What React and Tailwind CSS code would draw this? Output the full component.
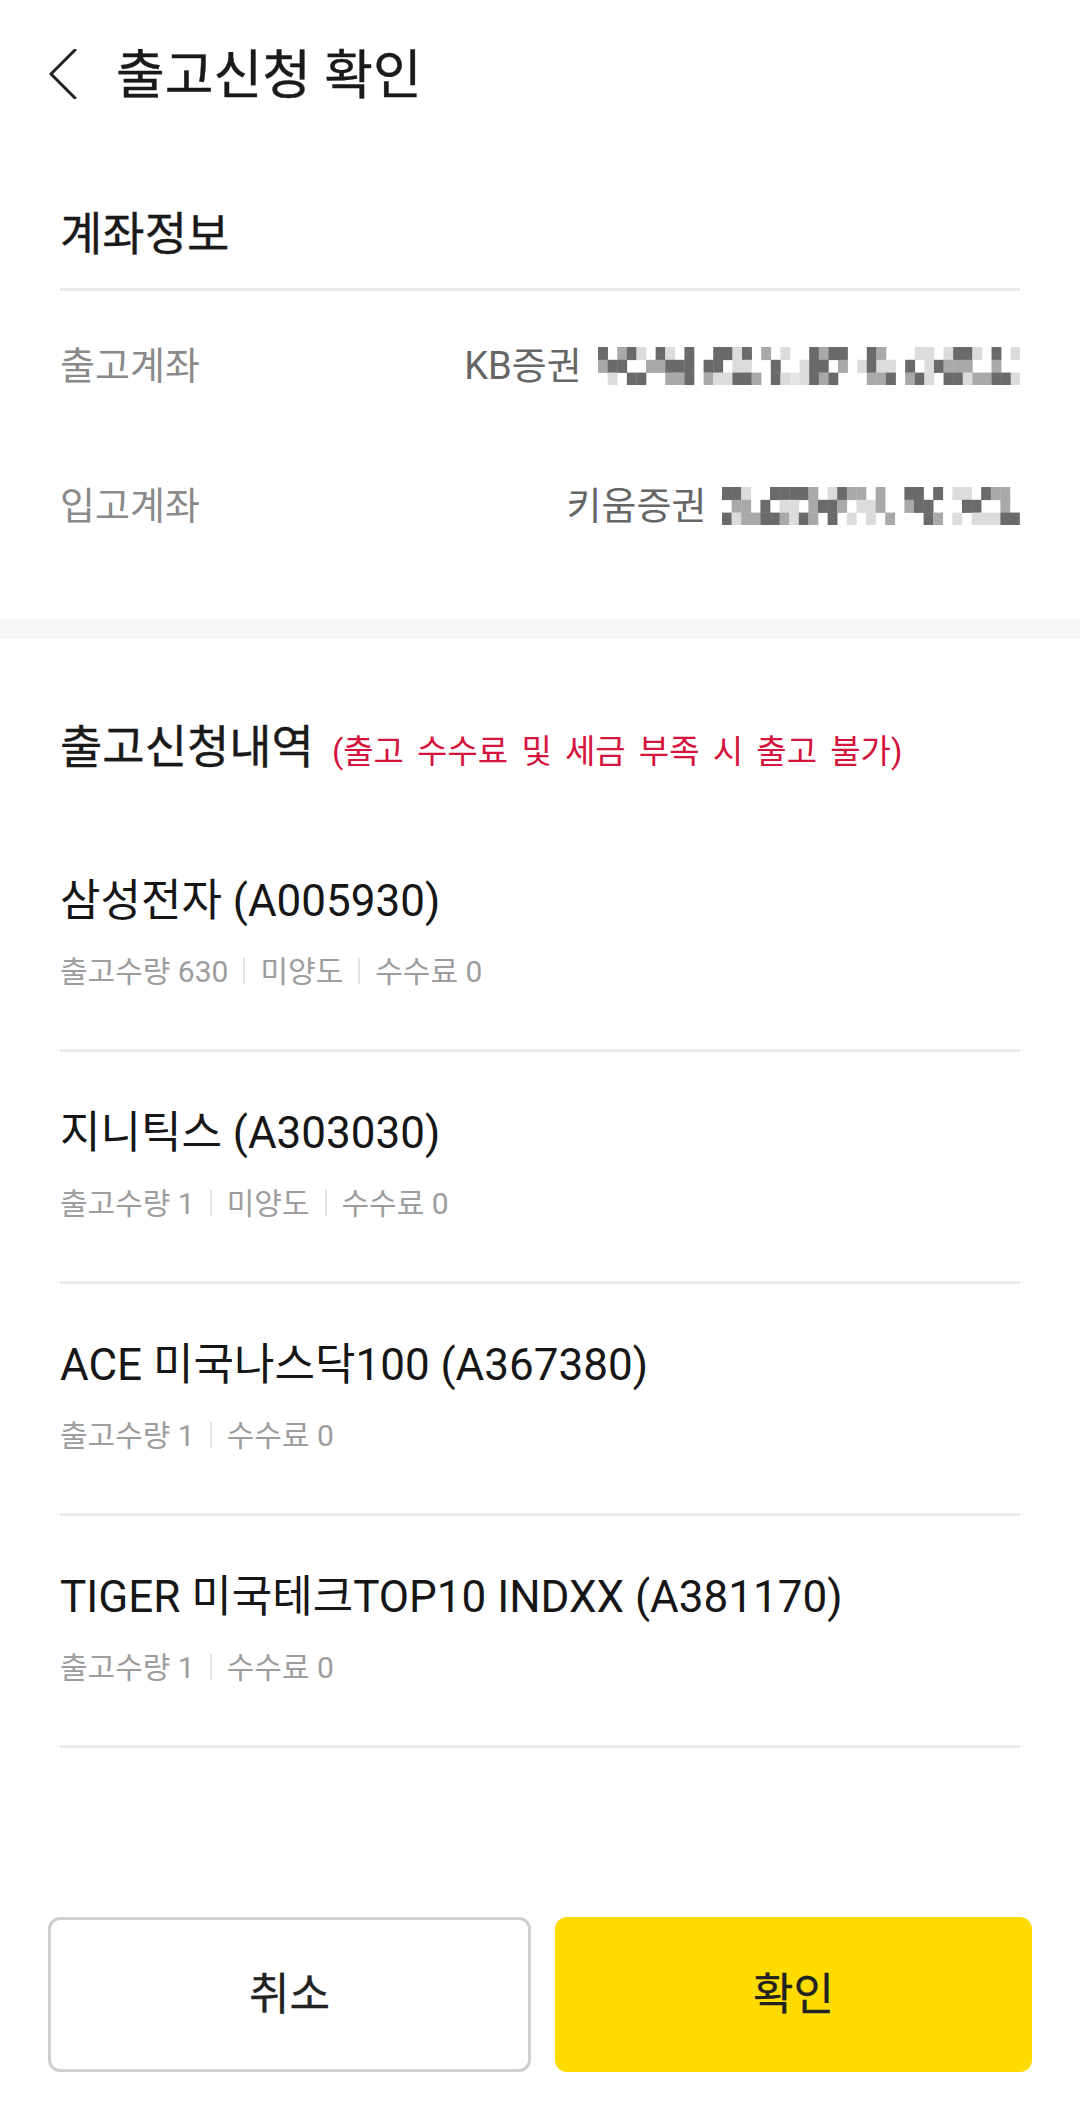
import React from "react";

function rand(seed) {
  let s = seed;
  return () => {
    s = (s * 1103515245 + 12345) % 2147483648;
    return s / 2147483648;
  };
}

function Mosaic({ width, seed, gaps = [] }) {
  const cw = 9.6;
  const ch = 12.8;
  const cols = Math.floor(width / cw);
  const r = rand(seed);
  const cells = [];
  for (let c = 0; c < cols; c++) {
    const gap = gaps.includes(c);
    for (let row = 0; row < 3; row++) {
      const v = r();
      if (gap && row !== 2) continue;
      let fill = null;
      if (gap) {
        if (v < 0.3) fill = "#e6e6e6";
      } else if (v < 0.3) fill = null;
      else if (v < 0.48) fill = "#dcdcdc";
      else if (v < 0.68) fill = "#a9a9a9";
      else fill = "#6a6a6a";
      if (fill) cells.push(<rect key={c + "-" + row} x={c * cw} y={row * ch} width={cw + 0.3} height={ch + 0.3} fill={fill} />);
    }
  }
  return (
    <svg width={cols * cw} height={ch * 3} viewBox={`0 0 ${cols * cw} ${ch * 3}`} className="block">
      {cells}
    </svg>
  );
}

const items = [
  { name: "삼성전자 (A005930)", meta: ["출고수량 630", "미양도", "수수료 0"] },
  { name: "지니틱스 (A303030)", meta: ["출고수량 1", "미양도", "수수료 0"] },
  { name: "ACE 미국나스닥100 (A367380)", meta: ["출고수량 1", "수수료 0"] },
  { name: "TIGER 미국테크TOP10 INDXX (A381170)", meta: ["출고수량 1", "수수료 0"] },
];

export default function App() {
  return (
    <div className="w-[1080px] h-[2110px] bg-white font-['Roboto','Noto_Sans_CJK_KR',sans-serif] text-[#1c1c1c] overflow-hidden">
      {/* Header */}
      <div className="h-[148px] flex items-center">
        <svg width="30" height="50" viewBox="0 0 30 50" className="ml-[48px]" fill="none">
          <path d="M27 1 L3 25 L27 49" stroke="#222" strokeWidth="3" strokeLinecap="round" strokeLinejoin="round" />
        </svg>
        <div className="ml-[38px] mt-[4px] text-[53px] leading-[64px] font-normal text-[#1a1a1a] [-webkit-text-stroke:0.4px_#1a1a1a]">출고신청 확인</div>
      </div>

      {/* Account info */}
      <div className="px-[60px]">
        <div className="pt-[60px] pb-[28px] text-[46px] leading-[52px] text-[#1a1a1a] [-webkit-text-stroke:0.35px_#1a1a1a]">계좌정보</div>
        <div className="h-[3px] bg-[#ebebeb]" />
        <div className="mt-[5px] h-[140px] flex items-center justify-between">
          <div className="text-[38px] text-[#8a8a8a]">출고계좌</div>
          <div className="flex items-center">
            <span className="text-[38px] text-[#666]">KB증권</span>
            <span className="ml-[16px]">
              <Mosaic width={430} seed={17} gaps={[10, 20, 26, 31]} />
            </span>
          </div>
        </div>
        <div className="h-[140px] flex items-center justify-between">
          <div className="text-[38px] text-[#8a8a8a]">입고계좌</div>
          <div className="flex items-center">
            <span className="text-[38px] text-[#666]">키움증권</span>
            <span className="ml-[16px]">
              <Mosaic width={302} seed={91} gaps={[18, 23]} />
            </span>
          </div>
        </div>
      </div>

      <div className="mt-[43px] h-[20px] bg-[#f5f6f6]" />

      {/* Request list */}
      <div className="px-[60px]">
        <div className="pt-[82px] pb-[42px] flex items-baseline">
          <span className="text-[46px] leading-[52px] text-[#1a1a1a] [-webkit-text-stroke:0.35px_#1a1a1a]">출고신청내역</span>
          <span className="ml-[18px] text-[33px] leading-[52px] text-[#d4143c] [word-spacing:5px]">(출고 수수료 및 세금 부족 시 출고 불가)</span>
        </div>
        {items.map((it) => (
          <div key={it.name} className="pt-[56px] pb-[58px] border-b-[3px] border-[#ebebeb]">
            <div className="text-[44px] leading-[50px] text-[#161616]">{it.name}</div>
            <div className="mt-[25px] h-[40px] flex items-center text-[30px] text-[#9d9d9d]">
              {it.meta.map((m, i) => (
                <React.Fragment key={m}>
                  {i > 0 && <span className="mx-[15px] w-[2px] h-[26px] bg-[#e4e4e4]" />}
                  <span>{m}</span>
                </React.Fragment>
              ))}
            </div>
          </div>
        ))}
      </div>

      {/* Buttons */}
      <div className="mt-[169px] px-[48px] flex gap-[24px]">
        <button className="flex-1 h-[155px] rounded-[12px] border-[3px] border-[#cfcfcf] bg-white text-[44px] text-[#222] [-webkit-text-stroke:0.3px_#222]">
          취소
        </button>
        <button className="flex-1 h-[155px] rounded-[12px] bg-[#fedc00] text-[44px] text-[#222] [-webkit-text-stroke:0.3px_#222]">
          확인
        </button>
      </div>
    </div>
  );
}
